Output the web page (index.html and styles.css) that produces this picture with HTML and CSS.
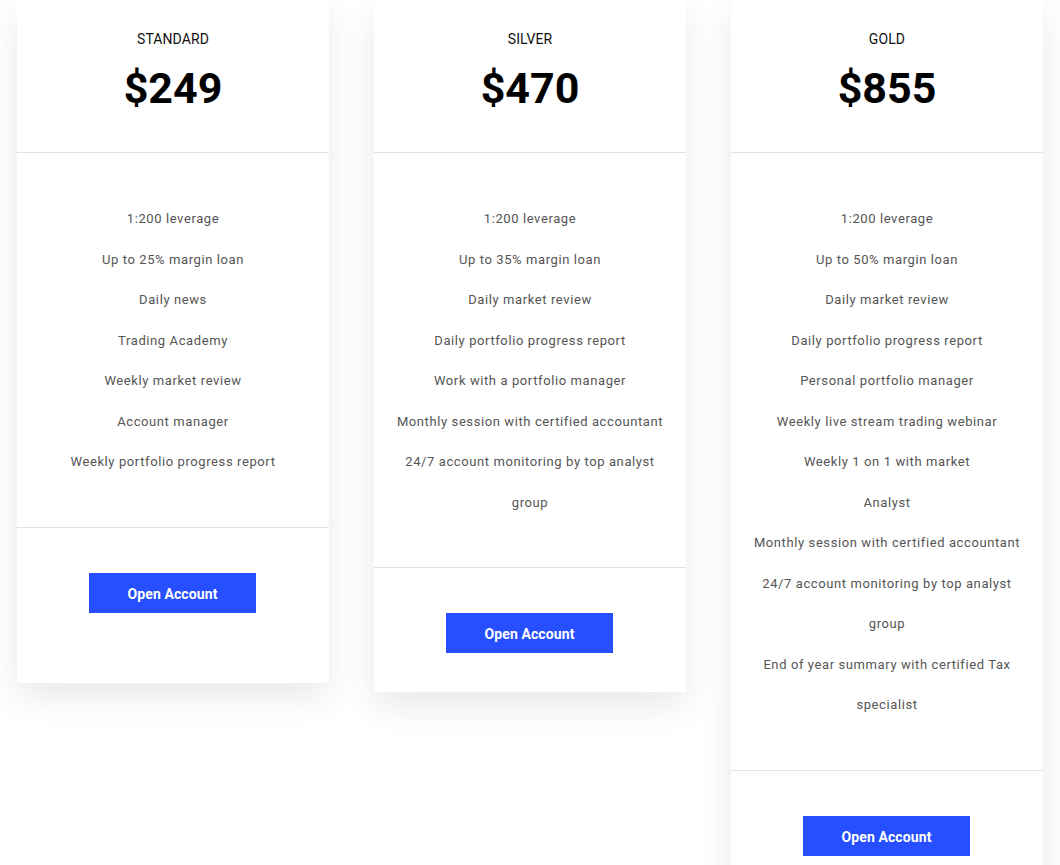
FILE: index.html
```html
<!DOCTYPE html>
<html lang="en">
<head>
<meta charset="utf-8">
<title>Pricing</title>
<link rel="stylesheet" href="styles.css">
</head>
<body>
<main class="plans">
  <section class="card">
    <header class="card-head">
      <h2 class="plan-name">STANDARD</h2>
      <div class="plan-price">$249</div>
    </header>
    <ul class="features">
      <li>1:200 leverage</li>
      <li>Up to 25% margin loan</li>
      <li>Daily news</li>
      <li>Trading Academy</li>
      <li>Weekly market review</li>
      <li>Account manager</li>
      <li>Weekly portfolio progress report</li>
    </ul>
    <footer class="card-foot"><a class="btn" href="#">Open Account</a></footer>
  </section>
  <section class="card">
    <header class="card-head">
      <h2 class="plan-name">SILVER</h2>
      <div class="plan-price">$470</div>
    </header>
    <ul class="features">
      <li>1:200 leverage</li>
      <li>Up to 35% margin loan</li>
      <li>Daily market review</li>
      <li>Daily portfolio progress report</li>
      <li>Work with a portfolio manager</li>
      <li>Monthly session with certified accountant</li>
      <li>24/7 account monitoring by top analyst group</li>
    </ul>
    <footer class="card-foot"><a class="btn" href="#">Open Account</a></footer>
  </section>
  <section class="card">
    <header class="card-head">
      <h2 class="plan-name">GOLD</h2>
      <div class="plan-price">$855</div>
    </header>
    <ul class="features">
      <li>1:200 leverage</li>
      <li>Up to 50% margin loan</li>
      <li>Daily market review</li>
      <li>Daily portfolio progress report</li>
      <li>Personal portfolio manager</li>
      <li>Weekly live stream trading webinar</li>
      <li>Weekly 1 on 1 with market<br>Analyst</li>
      <li>Monthly session with certified accountant</li>
      <li>24/7 account monitoring by top analyst group</li>
      <li>End of year summary with certified Tax specialist</li>
    </ul>
    <footer class="card-foot"><a class="btn" href="#">Open Account</a></footer>
  </section>
</main>
</body>
</html>
```

FILE: styles.css
```css
html, body {
  margin: 0;
  padding: 0;
  background: #fff;
  overflow: hidden;
}

body {
  font-family: Roboto, "Liberation Sans", Arial, sans-serif;
  color: #000;
}

.plans {
  display: flex;
  justify-content: center;
  align-items: flex-start;
  gap: 45px;
  padding: 0 17px 60px;
}

.card {
  width: 312px;
  min-height: 683px;
  background: #fff;
  display: flex;
  flex-direction: column;
  box-shadow: 0 14px 34px rgba(0, 0, 0, 0.09);
}

.card-head {
  padding: 30px 0 39px;
  text-align: center;
  border-bottom: 1px solid #e3e3e3;
}

.plan-name {
  margin: 0;
  font-size: 14px;
  line-height: 18px;
  font-weight: 400;
  letter-spacing: 0.1px;
  color: #111;
}

.plan-price {
  margin-top: 15px;
  font-size: 43px;
  line-height: 50px;
  font-weight: 700;
  color: #000;
}

.features {
  list-style: none;
  margin: 0;
  padding: 46px 18px 44px;
  text-align: center;
  font-size: 13px;
  line-height: 40.5px;
  letter-spacing: 0.6px;
  color: #555;
  border-bottom: 1px solid #e3e3e3;
}

.features li {
  margin: 0;
}

.card-foot {
  flex: 1;
  padding: 45px 0 39px 72px;
  display: flex;
  justify-content: flex-start;
  align-items: flex-start;
}

.btn {
  box-sizing: border-box;
  display: flex;
  align-items: center;
  justify-content: center;
  width: 167px;
  height: 40px;
  padding-top: 2px;
  background: #2650ff;
  color: #fff;
  font-size: 14px;
  font-weight: 700;
  letter-spacing: 0.1px;
  text-decoration: none;
}
```
